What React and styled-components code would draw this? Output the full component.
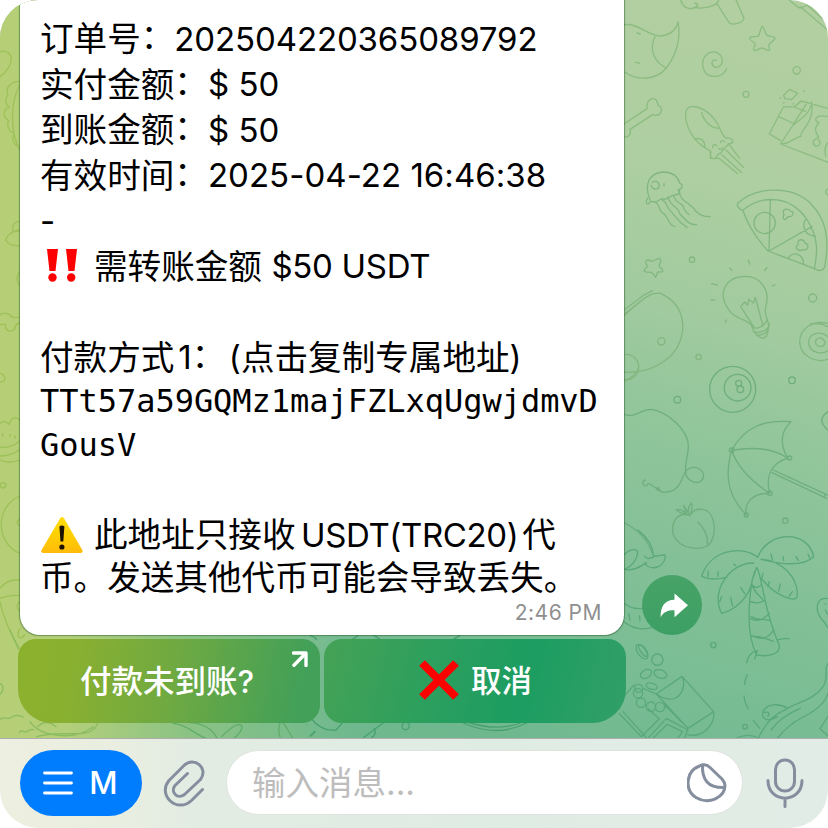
import React from 'react'
import styled, { createGlobalStyle } from 'styled-components'

const lines = [
  {
    parts: [
      { zh: '订单号' },
      { zh: '：', lift: 2 },
      { en: '202504220365089792', ls: -0.12 },
    ],
  },
  { parts: [{ zh: '实付金额' }, { zh: '：', lift: 2 }, { en: '$ 50' }] },
  { parts: [{ zh: '到账金额' }, { zh: '：', lift: 2 }, { en: '$ 50' }] },
  {
    parts: [
      { zh: '有效时间' },
      { zh: '：', lift: 2 },
      { en: '2025-04-22 16:46:38', ls: 0.04 },
    ],
  },
  { parts: [{ en: '-' }] },
  {
    icon: 'bang',
    parts: [{ zh: '需转账金额' }, { en: '$50 USDT', gap: 9.5, ls: -0.3 }],
  },
  { parts: [] },
  {
    parts: [
      { zh: '付款方式' },
      { en: '1', gap: 4 },
      { zh: '：', lift: 2 },
      { en: '(', gap: 3.5 },
      { zh: '点击复制专属地址' },
      { en: ')' },
    ],
  },
  { mono: true, height: 41.5, parts: [{ en: 'TTt57a59GQMz1majFZLxqUgwjdmvD', ls: -0.03 }] },
  { mono: true, height: 47.5, parts: [{ en: 'GousV' }] },
  { height: 43, parts: [] },
  {
    icon: 'warning',
    parts: [
      { zh: '此地址只接收' },
      { en: 'USDT(TRC20)', gap: 5.5, ls: -0.38 },
      { zh: '代', gap: 4 },
    ],
  },
  { height: 38.5, parts: [{ zh: '币。发送其他代币可能会导致丢失。' }] },
]

const Bang = () => (
  <Emoji viewBox="0 0 54 36" $drop={5}>
    <g fill="#ff0000">
      <path d="M7 2h11l-2.5 22h-6zM26 2h11l-2.5 22h-6z" />
      <circle cx="12.5" cy="30.5" r="4.2" />
      <circle cx="31.2" cy="30.5" r="4.2" />
    </g>
  </Emoji>
)

const Warning = () => (
  <Emoji viewBox="0 0 54 36" $drop={6}>
    <defs>
      <linearGradient id="warn" x1="0" y1="0" x2="0" y2="1">
        <stop offset="0" stopColor="#ffdc10" />
        <stop offset=".5" stopColor="#ffd000" />
        <stop offset="1" stopColor="#ffba0c" />
      </linearGradient>
    </defs>
    <path
      d="M20.2 1.2q1.9-2.4 3.8 0l18.4 32q.8 2.6-1.8 2.8H3.2q-2.6-.2-1.8-2.8z"
      fill="url(#warn)"
    />
    <path d="M19.4 9.5q2.5-2 5 0l-1.1 15h-2.8z" fill="#1c1400" />
    <circle cx="21.9" cy="30" r="2.6" fill="#1c1400" />
  </Emoji>
)

// each tile is drawn at three times its size and scaled down
const Tile = ({ x, y, color, children }) => (
  <g
    transform={`translate(${x} ${y}) scale(.33333)`}
    stroke={color}
    strokeWidth="4"
    fill="none"
    strokeLinecap="round"
    strokeLinejoin="round"
  >
    {children}
  </g>
)

const Wallpaper = () => (
  <Doodles viewBox="0 0 828 738">
    <Tile x={608} y={0} color="#8dbc81">
      <path d="M218 0c8 26 32 34 50 17M260 10c10-2 14 12 0 12c25 6 66-2 72-22M327 11l37 58c12 8 40 0 44-14L384 0" />
      <path d="M40 75c50-10 80 34 118 33c34-4 48-24 52-42c10 50-6 100-35 138c-30 38-90 38-125 12M141 110c-20 40 0 80 35 94M87 99l10 3M82 187l12 2" />
      <path d="M463 79c5 0 8 22 14 27c8 5 28 2 23 12l-16 14c-5 8 6 20-2 19c-7 0-14-7-20-7c-8 0-18 12-24 7c-5-5 7-16 2-22c-5-5-18-9-14-16c5-7 20 0 25-5c5-6 7-27 12-29z" />
      <path d="M356 206c-15 32-60 30-70 0c-12-40 28-64 50-42c17 24-2 44-18 36c-12-9-4-24 6-19" />
      <circle cx="566" cy="211" r="11" />
      <circle cx="414" cy="283" r="9" />
      <path d="M48 372l69-46c-5-34 32-42 33-10c20 6 10 36-16 28L66 388c5 15-4 25-18 22" />
      <path d="M308 453c-54-24-78-78-75-116c8-35 60-12 85 19c22 28 21 50 36 58c15-3 24 7 18 15c-19 1-24 27-42 34c-8 18-15 14-22 9zM281 337c5 28 32 49 52 47M260 417c17-5 30 4 31 24M307 453v22h26l56 46M340 463l61 55M354 450l52 52M361 431l34 44" />
      <path d="M314 443c0-12 10-12 12-5M332 445c4 5 12 4 12-2M338 428c0-9 9-7 12-2" />
      <path d="M527 286l18-18 24 12-18 19-21-3zM526 321l33-1 20-17 81 22M526 321l-42 81 34 20M518 432l145 56M512 350l49 22M559 321l33 13M611 306c-5 40-35 50-58 72l-35 54M611 306c10 63-38 87-32 103c-25 5-32 23-61 23M598 307l-42 66M580 303l-20 17" />
      <path d="M660 350c-40-9-44 13-27 18c-20 20-7 32-1 44c-20 7-20 22-8 26c12 4 15-15 6-20M653 469c-5-23 0-35 7-41" />
      <circle cx="587" cy="274" r="1" />
      <circle cx="517" cy="293" r="1" />
      <circle cx="527" cy="308" r="1" />
      <circle cx="556" cy="311" r="1" />
      <path d="M544 0l28 23q10 2 25-8M572 23l6-2 82 70M598 15l64 58" />
    </Tile>
    <Tile x={608} y={180} color="#83b780">
      <path d="M126 60c-20-50 0-82 40-84c30 0 44 16 50 35c12 0 6 20-5 17l2 14l-20 5l-18 10l-15 0l-17 9l-15-2c-10 14-18 7-9-10M133 8c10-14 25 6 19 15c-8 8-21 4-23-7M168 11v6" />
      <path d="M142 66c13 8 10 20 19 31c20 6 16 38 40 43M162 59c18 10 12 23 27 35c14 16 20 30 48 48M180 50c7 33 31 26 36 53c15 12 24 33 50 31M198 48c5 27 27 17 29 36c5 10 8 16 16 19M214 32c1 36 34 34 48 60c15 14 22 18 45 18" />
      <path d="M389 70c60-56 170-50 218 0c45 46 60 100 43 191c-5 12-18 14-30 5L480 213c-30-33-60-76-75-121c-11-2-19-14-16-22zM405 90c65-52 145-36 188 23c42 60 35 108 26 154M487 60l-4 153 130-74M593 117c-10 15-8 50 30 52M540 235c15-22 46-16 47 18" />
      <circle cx="470" cy="129" r="32" />
      <path d="M526 98c-4-12 18-14 22-4c15 0 5 20-8 15c-7 18-20 7-12-4zM570 190c-2-14 18-14 20-1c16 5 10 23-4 20c-17 8-28-9-16-14z" />
      <path d="M108 272c3-6 10-9 10-14c-10-18-2-22 13-14c13-4 25-14 27-5c2 9-6 15-4 20c3 5 15 12 9 16c-7 3-12-2-15 3l-5 14l-11-14c-10-5-22 3-24-6z" />
      <circle cx="252" cy="239" r="8" />
      <circle cx="160" cy="484" r="11" />
      <circle cx="272" cy="531" r="8" />
      <circle cx="614" cy="354" r="12" />
      <path d="M48 406c56-48 76-70 110-66c86 40 80 136 30 188c-45 40-90 52-140 48M48 390l60-45 26-13M52 400l64-50" />
      <circle cx="54" cy="561" r="38" />
      <path d="M48 605c25-14 44-30 44-45" />
      <path d="M432 440c-6-22-48-20-66-46c-42-52-14-105 46-105c52 0 72 48 63 84c-12 36 10 50 6 62M437 440l-39-60 12-14 9 10 3-18 14 11 6-17 23 86M432 440c15 12 38-3 47-22M438 455c20 8 48-9 46-24M447 466c20-2 27-5 34-20M432 440l6 16l12 12c15 12 24 6 28-6l6-30" />
      <path d="M421 240l4 12M365 264l7 7M477 263l-7 9M310 311l18 4M493 318l8-3M309 359l11 1M355 420l-3 8" />
      <path d="M660 430c-45-10-85 14-85 57c3 40 46 65 85 50M660 470c-27-20-60-9-58 20c4 30 44 35 60 20M650 484c-12-20-35-6-25 10c10 11 26 5 27-8M607 432q30-5 53 8" />
      <path d="M660 27q-14 8 0 18" />
    </Tile>
    <Tile x={608} y={350} color="#6fae7e">
      <circle cx="374" cy="118" r="69" />
      <circle cx="389" cy="113" r="40" />
      <circle cx="392" cy="100" r="9" />
      <circle cx="397" cy="118" r="10" />
      <circle cx="208" cy="149" r="10" />
      <circle cx="552" cy="91" r="10" />
      <circle cx="532" cy="512" r="8" />
      <path d="M660 185q-37 24 0 56" />
      <path d="M48 193c35 12 50-15 81-15c45 5 116 62 112 115c-2 30-11 48-8 72c15-22 50-14 54 12c-5 36-55 20-54-12c-13 14-12 60-63 62c-9 0-15-4-20-10M119 401c20 4 18 14 31 16M112 390c-14 3-7 22 6 16" />
      <circle cx="150" cy="417" r="4" />
      <path d="M371 301c40-72 98-92 178-86c-30 27-35 66-10 110c-45-33-108-34-168-24c20 60 70 100 114 129c-10-40-5-87 55-106M371 301c-23 80-9 140 44 194c-7-35 18-66 66-65M496 360l165 76M492 368l164 77M650 435l-1 8" />
      <circle cx="371" cy="301" r="7" />
      <circle cx="545" cy="324" r="6" />
      <circle cx="485" cy="430" r="7" />
      <circle cx="415" cy="495" r="6" />
      <path d="M246 496c-42-12-58 25-50 58c20 48 85 46 106 31c28-33 20-104-20-107c-21-2-26 5-36 18zM270 516c18 18 30 42 28 66M238 494c-10-3-25-4-33-15c12-2 25 5 31 15l-9-28 15 25c-4-13 3-28 9-32c3 15-1 28-5 37" />
      <path d="M48 518c40 20 70 50 84 90" />
    </Tile>
    <Tile x={608} y={530} color="#5aa87b">
      <path d="M90 0c30 24 45 50 46 77c15 5 38-10 36 4c-7 38-50 40-62 18M110 78c7 12 13 8 27 3M48 74c15-15 32-20 41-10c0 25-20 48-41 54c25 5 45-5 68-20" />
      <path d="M48 220q25 20 57 15M48 275q35 30 85 18M62 250l4 20M94 257l2 15" />
      <path d="M449 82c-48-40-145-20-168 57c25 12 50 8 75 3M449 82c30-80 150-85 168-2c-30 30-90 25-158 8M437 99c-70-2-132 84-96 151c40-10 82-48 91-93M459 88c60 2 114 54 108 112c-3 20-65-3-103-50M446 112c20 35 15 110 68 235c3 25-35 35-68 28c-26-50-28-130-14-221zM432 154l8-30M460 150l5-20M427 215c20 7 35 2 44-6M426 265c18 11 36 9 58-15M436 318c22 14 44 6 60-16M433 165c9 12 20 7 29-2M434 170l12 20 18 18M430 260c20 14 34 3 56 12M430 318c30 3 39 4 66 16M508 330q15-5 36-4M416 398q5-30 33-37M440 387l7-22" />
      <path d="M300 123v17M330 125v14M378 102l5 5M489 72l4 18M525 80l2 11M564 80l7 11M600 73l5 10M341 200l-6 15M368 202l5 25M398 172l13 20M484 155l-4 15M517 162l-5 21M553 185l-10 14" />
      <circle cx="316" cy="345" r="8" />
      <circle cx="148" cy="389" r="17" />
      <ellipse cx="102" cy="365" rx="13" ry="25" transform="rotate(-35 102 365)" />
      <ellipse cx="105" cy="362" rx="7" ry="20" transform="rotate(-35 105 362)" />
      <ellipse cx="114" cy="432" rx="18" ry="12" transform="rotate(-30 114 432)" />
      <ellipse cx="157" cy="432" rx="20" ry="12" transform="rotate(20 157 432)" />
      <ellipse cx="131" cy="469" rx="17" ry="9" transform="rotate(15 131 469)" />
      <circle cx="92" cy="475" r="12" />
      <circle cx="90" cy="490" r="14" />
      <circle cx="99" cy="518" r="14" />
      <circle cx="129" cy="530" r="14" />
      <circle cx="156" cy="531" r="14" />
      <path d="M145 492l77-53 95 106c5 35-30 80-78 69M222 439c18 40-16 95-77 53M317 545l-77 50M105 475l40 17 95 103-10 30M78 465l-45 50M33 550l67 70M45 545l70 78M100 620l54-54-34-30M120 625l55-60 65 35M135 625l43-42 46 22-15 20M170 525l70 70" />
      <path d="M660 400c-15 22 6 41-17 73c-28 38-80 45-110 66c-30 12-56 32-82 85M540 535c-30-18-72-14-77 18c5 27 35 14 46 7M465 548c15-4 22 0 15 10M660 490c-10 32-38 54-80 74c-30 16-49 32-71 60M577 535q-60 25-88 65M418 434q-7 14-8 29M408 498q2 22 13 38M436 571l19 24M386 624q33-16 66 0M660 560l-24 36 24 22" />
      <circle cx="411" cy="590" r="7" />
      <path d="M660 206c-38-6-42 38-14 67l14 20M652 222h1M652 240l6 12" />
    </Tile>
    <Tile x={0} y={0} color="#9ec15a">
      <path d="M0 155q30-6 34 20q0 30-34 55M60 244c-30 0-45 20-36 40c-10 14-8 30 4 38c-20 6-20 30-2 40c-7 14 0 34 17 37c-10 22 0 38 17 41M60 255c-30 50-30 140 0 198M60 664q-22 0-22 22c0 10 6 12 22 5M55 690c-15 4-34 14-38 30c8 16 26 18 43 17M60 815q-18 20 0 44" />
    </Tile>
    <Tile x={0} y={220} color="#9dc057">
      <path d="M0 194M0 285c10-10 30-5 34 5q12 6 26 0M0 314q14-3 16 0c0 25 30 25 30 5q4-11 14-9M0 459c20 8 20 25 0 28M0 610c12-12 20-2 28 3c3-22 24-24 32-12M0 682q35 3 60-20M0 708q35 0 60-20M0 720q30 12 60 0M8 640v8M30 643v7M45 648v7M60 828c-74 30-76 140 0 172M60 898q-18 6 0 20M0 1105q25-30 60-25M0 1135q30-12 60-8M0 1145q15 70 58 140M60 1145c-14 10-10 20 2 32M60 1225c-14 25 0 38 14 20" />
      <circle cx="9" cy="796" r="8" />
    </Tile>
    <Tile x={0} y={630} color="#8cbc62">
      <path d="M30 0l25 57M0 160q12 7 8 20t-8 12M0 268c18-12 20 5 36-7q12-10 34 0M58 308c6-14 18 5 25-5q8-5 18-4M90 275c30 45 130 60 190 15M113 290q26-25 55 0M110 320c70-24 170 15 183-42" />
      <path
        d="M520 280c50 5 70 40 100 45M570 278q60 5 80 45M665 320q42-45 60-34q5 16-22 38M840 280q-7 20 0 40M850 278l28 45M920 284v1M945 306l-12 12"
        stroke="#62ac6a"
      />
    </Tile>
    <Tile x={310} y={630} color="#48a06f">
      <path d="M0 260q30 45 78 40l25-28M0 318l15-14M160 323l60-45M185 323q16-12 8-28M460 279q100 45 190 0M480 279q85 25 150 0M0 16q15 5 20 12M145 16q-12 10-25 15M190 16l18 10M450 16l-20 12" />
      <circle cx="287" cy="288" r="11" />
    </Tile>
  </Doodles>
)

const App = () => {
  return (
    <>
      <GlobalStyle />
      <Screen>
        <Chat>
          <Wallpaper />
          <MessageRow>
            <Bubble>
              {lines.map((line, i) => (
                <Line key={i} $height={line.height} $mono={line.mono}>
                  {line.icon === 'bang' && <Bang />}
                  {line.icon === 'warning' && <Warning />}
                  {line.parts.map((part, j) =>
                    part.zh ? (
                      <Zh key={j} $gap={part.gap} $lift={part.lift}>
                        {part.zh}
                      </Zh>
                    ) : (
                      <En key={j} $gap={part.gap} $ls={part.ls}>
                        {part.en}
                      </En>
                    )
                  )}
                </Line>
              ))}
              <Time>2:46 PM</Time>
            </Bubble>
            <ShareButton aria-label="share">
              <svg width="30" height="26" viewBox="0 0 30 26">
                <path
                  d="M15.5 1.5v6.3C6 8 1.5 14 1.6 25.2C5 19.5 9 18.2 15.5 18.3v6.9L29 13.2z"
                  fill="#fff"
                />
              </svg>
            </ShareButton>
          </MessageRow>
          <Keyboard>
            <KeyButton $side="left">
              付款未到账?
              <Corner viewBox="0 0 16 16">
                <path d="M1.5 2h12.5v12.5M13 3L2 14.2" />
              </Corner>
            </KeyButton>
            <KeyButton $side="right">
              <Cross viewBox="0 0 40 40">
                <path d="M3 3l34 34M37 3L3 37" />
              </Cross>
              <span>取消</span>
            </KeyButton>
          </Keyboard>
        </Chat>
        <InputBar>
          <MenuButton>
            <svg width="30" height="24" viewBox="0 0 30 24">
              <path
                d="M1.5 2h27M1.5 12h27M1.5 22h27"
                stroke="#fff"
                strokeWidth="2.8"
                strokeLinecap="round"
              />
            </svg>
            M
          </MenuButton>
          <BarIcon width="42" height="48" viewBox="0 0 42 48">
            <path d="M39.5 30.5L28.500 41.500C14 55-6 36 6 21.500L21 6.500C31-3 46 9 37.500 20.500L21.500 35.500C14.500 41 7 33 12 26.500L24.500 14.500" />
          </BarIcon>
          <Field>
            <Placeholder>输入消息...</Placeholder>
            <BarIcon width="40" height="40" viewBox="0 0 40 40">
              <path d="M12.500 3C-1 8-3 27 9 34.500C22 42.500 38 34 38 22.500Q38 19.500 35 16L23 4.500Q18.500 0 12.500 3z" />
              <path d="M15.500 2C15 16 20 25 37.500 24.500" />
            </BarIcon>
          </Field>
          <BarIcon width="40" height="52" viewBox="0 0 40 52">
            <rect x="10.500" y="3" width="19" height="31" rx="9.500" />
            <path d="M3 23.500C3 47 37 47 37 23.500M20 41.500v8" />
          </BarIcon>
        </InputBar>
      </Screen>
    </>
  )
}

const GlobalStyle = createGlobalStyle`
  body {
    margin: 0;
    background: #fff;
    font-family: Inter, "Noto Sans CJK SC", sans-serif;
  }
  * {
    box-sizing: border-box;
  }
  button {
    border: 0;
    padding: 0;
    font-family: inherit;
  }
  svg {
    display: block;
    flex: none;
  }
`

const Screen = styled.main`
  width: 828px;
  height: 828px;
  display: flex;
  flex-direction: column;
  overflow: hidden;
  border-radius: 38px;
`

const Chat = styled.section`
  position: relative;
  height: 738px;
  background: linear-gradient(
      to right,
      #b6cf76 0,
      #b3cf79 8%,
      rgba(160, 202, 126, 0.6) 22%,
      rgba(130, 190, 132, 0) 42%
    ),
    linear-gradient(
      196deg,
      #b2cfa0 0,
      #aecfa1 21%,
      #a0ca9f 37%,
      #93c69b 47%,
      #84c097 62%,
      #78bc94 76%,
      #6fb88f 85%,
      #70b98c 100%
    );
`

const Doodles = styled.svg`
  position: absolute;
  inset: 0;
  width: 828px;
  height: 738px;
`

const MessageRow = styled.div`
  position: relative;
  display: flex;
  align-items: flex-end;
  gap: 18px;
  height: 635px;
  padding-left: 20px;
`

const Bubble = styled.article`
  width: 604px;
  height: 635px;
  padding: 16.5px 20px 0 20px;
  border-radius: 0 0 20px 20px;
  background: #fff;
  box-shadow: 0 0 1px 0.5px rgba(40, 90, 40, 0.5);
`

const Line = styled.p`
  margin: 0;
  height: ${({ $height }) => $height || 45.5}px;
  line-height: ${({ $height }) => $height || 45.5}px;
  font-size: ${({ $mono }) => ($mono ? 32 : 33)}px;
  font-family: ${({ $mono }) =>
    $mono ? '"DejaVu Sans Mono", monospace' : 'inherit'};
  white-space: pre;
  color: #000;
`

const Zh = styled.span`
  position: relative;
  top: ${({ $lift }) => 0.6 - ($lift || 0)}px;
  margin-left: ${({ $gap }) => $gap || 0}px;
  font-family: 'Noto Sans CJK SC', sans-serif;
  font-size: 33.6px;
  line-height: 0;
`

const En = styled.span`
  margin-left: ${({ $gap }) => $gap || 0}px;
  letter-spacing: ${({ $ls }) => $ls || 0}px;
`

const Emoji = styled.svg`
  display: inline-block;
  width: 54px;
  height: 36px;
  vertical-align: -${({ $drop }) => $drop}px;
`

const Time = styled.div`
  height: 32px;
  line-height: 32px;
  text-align: right;
  font-size: 21px;
  letter-spacing: 0.5px;
  padding-right: 2px;
  color: #8f8f8f;
`

const ShareButton = styled.button`
  width: 60px;
  height: 60px;
  display: flex;
  align-items: center;
  justify-content: center;
  padding-left: 3px;
  border-radius: 50%;
  background: linear-gradient(#47a367, #3d9f64);
`

const Keyboard = styled.div`
  position: relative;
  display: flex;
  gap: 4px;
  margin-top: 4px;
  padding-left: 18px;
`

const KeyButton = styled.button`
  position: relative;
  width: 302px;
  height: 84px;
  display: flex;
  align-items: center;
  justify-content: center;
  gap: 12px;
  padding: ${({ $side }) => ($side === 'left' ? '0 4px 5px 0' : '0 0 5px 1px')};
  font-size: ${({ $side }) => ($side === 'left' ? 31.5 : 30.5)}px;
  font-weight: 500;
  color: #fff;
  border-radius: ${({ $side }) =>
    $side === 'left' ? '18px 18px 18px 34px' : '18px 18px 34px 18px'};
  background: ${({ $side }) =>
    $side === 'left'
      ? 'linear-gradient(100deg, #8cb12e 0, #8ab030 18%, #6ea942 52%, #42a058 92%)'
      : 'linear-gradient(105deg, #45a255 0, #2b9f5e 38%, #1c9d61 65%, #329f68 100%)'};
`

const Corner = styled.svg`
  position: absolute;
  top: 12px;
  right: 12px;
  width: 16px;
  height: 16px;
  fill: none;
  stroke: #fff;
  stroke-width: 3.4px;
  stroke-linecap: round;
  stroke-linejoin: round;
`

const Cross = styled.svg`
  width: 40px;
  height: 40px;
  margin-top: 3px;
  stroke: #ff0000;
  stroke-width: 8px;
`

const InputBar = styled.footer`
  height: 90px;
  display: flex;
  align-items: center;
  padding: 0 23px 2px 20px;
  border-top: 1px solid #adadad;
  background: linear-gradient(
    to right,
    #edefe0 0,
    #e9eee0 14%,
    #e2ece3 24%,
    #dfece4 60%,
    #e2ece6 100%
  );
`

const MenuButton = styled.button`
  width: 122px;
  height: 66px;
  display: flex;
  align-items: center;
  justify-content: center;
  gap: 16px;
  margin-right: 21px;
  padding-right: 1px;
  border-radius: 33px;
  background: #007dff;
  color: #fff;
  font-size: 31px;
  font-weight: 500;
`

const BarIcon = styled.svg`
  fill: none;
  stroke: #858e9e;
  stroke-width: 3px;
  stroke-linecap: round;
  stroke-linejoin: round;
`

const Field = styled.div`
  width: 517px;
  height: 65px;
  display: flex;
  align-items: center;
  justify-content: space-between;
  margin: 0 22px 0 21px;
  padding: 0 15px 0 25px;
  border: 1px solid #dfe3df;
  border-radius: 33px;
  background: #fff;
`

const Placeholder = styled.span`
  padding-bottom: 4px;
  font-size: 33.5px;
  color: #bdbdbd;
`

export default App
